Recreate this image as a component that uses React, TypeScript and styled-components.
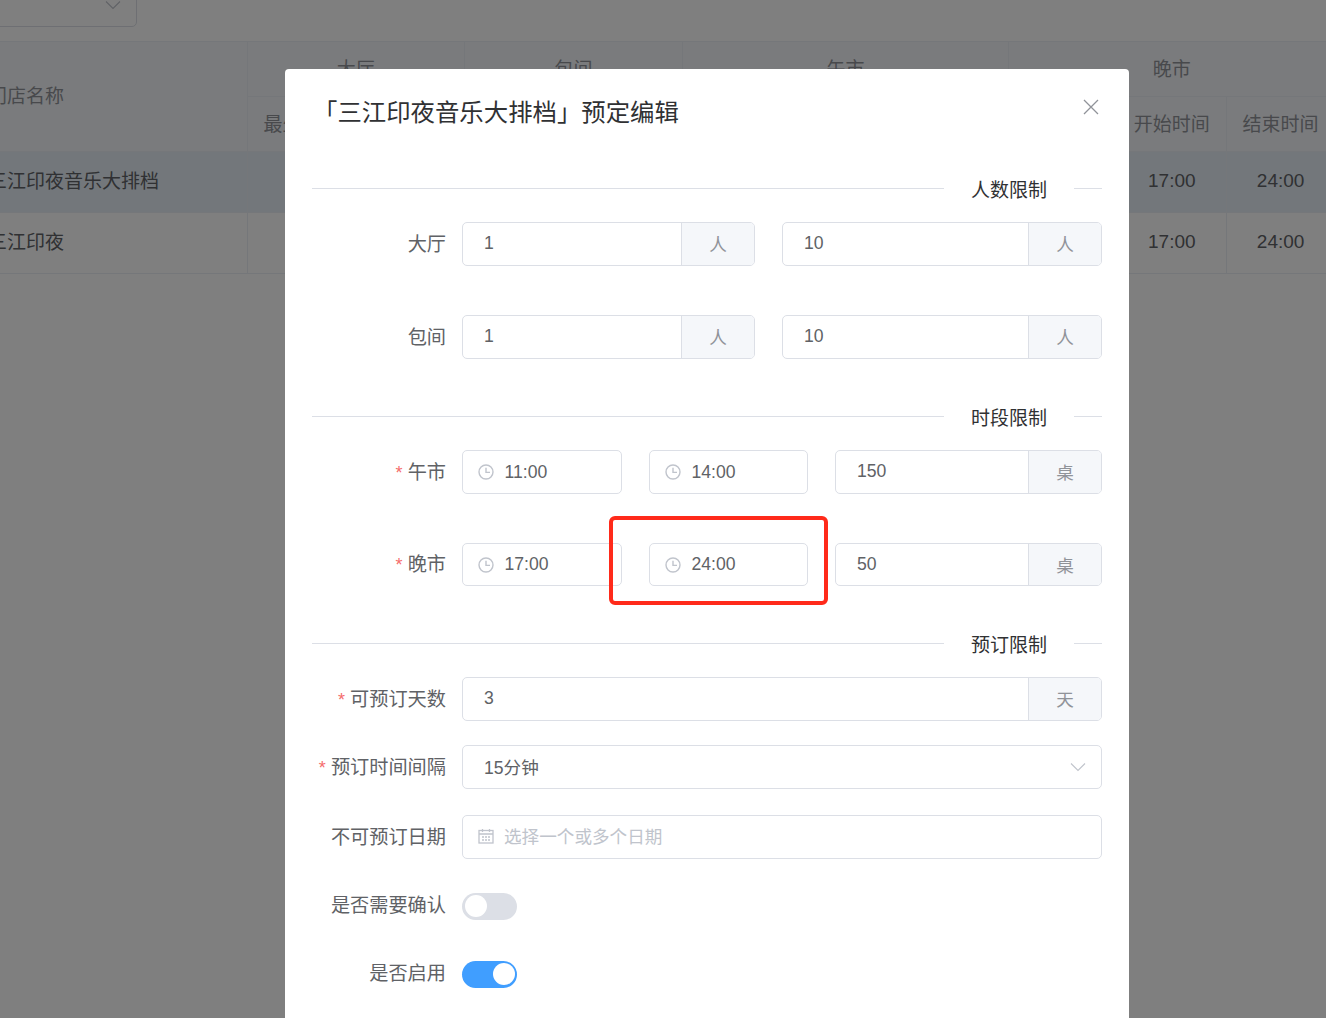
import styled, { createGlobalStyle } from 'styled-components'

const GlobalStyle = createGlobalStyle`
  html, body {
    margin: 0;
    padding: 0;
    background: #fff;
    font-family: "Liberation Sans", "Noto Sans CJK SC", sans-serif;
  }
  * {
    box-sizing: border-box;
  }
`

const Screen = styled.div`
  position: relative;
  width: 1326px;
  height: 1018px;
  overflow: hidden;
`

const Page = styled.div`
  margin-left: -40px;
  width: 1380px;
`

const FilterSelect = styled.div`
  display: flex;
  align-items: center;
  justify-content: flex-end;
  width: 177px;
  height: 44px;
  margin-top: -17px;
  padding-right: 15px;
  border: 1px solid #dcdfe6;
  border-radius: 5px;
  color: #c0c4cc;
`

const Table = styled.table`
  margin-top: 14px;
  width: 1375px;
  table-layout: fixed;
  border-collapse: collapse;
  border-top: 1px solid #ebeef5;
  font-size: 19px;
`

const Th = styled.th<{ $first?: boolean }>`
  height: 55px;
  padding: ${(p) => (p.$first ? '0 0 4px 28px' : '0 0 4px')};
  background: #f5f7fa;
  border-right: 1px solid #ebeef5;
  border-bottom: 1px solid #ebeef5;
  color: #909399;
  font-weight: 400;
  text-align: ${(p) => (p.$first ? 'left' : 'center')};
`

const Row = styled.tr<{ $active?: boolean }>`
  background: ${(p) => (p.$active ? '#e6eff7' : '#fff')};
`

const Td = styled.td<{ $first?: boolean }>`
  height: 61px;
  padding: ${(p) => (p.$first ? '0 0 6px 28px' : '0 0 3px')};
  border-right: 1px solid #ebeef5;
  border-bottom: 1px solid #ebeef5;
  color: #606266;
  text-align: ${(p) => (p.$first ? 'left' : 'center')};
  white-space: nowrap;
`

const Overlay = styled.div`
  position: absolute;
  inset: 0;
  padding: 69px 0 0 285px;
  background: rgba(0, 0, 0, 0.5);
`

const Modal = styled.div`
  position: relative;
  width: 844px;
  height: 1100px;
  padding: 0 27px;
  background: #fff;
  border-radius: 4px;
`

const Title = styled.div`
  height: 86px;
  padding-top: 25px;
  padding-left: 1px;
  color: #303133;
  font-size: 24.4px;
  line-height: 38px;
  white-space: nowrap;
`

const CloseButton = styled.button`
  position: absolute;
  top: 30px;
  right: 30px;
  display: flex;
  padding: 0;
  border: 0;
  background: none;
  color: #909399;
`

const Section = styled.div<{ $top: number }>`
  display: flex;
  align-items: center;
  height: 1px;
  margin-top: ${(p) => p.$top}px;
  margin-bottom: 33px;
  color: #303133;
  font-size: 19px;

  &::before {
    content: '';
    flex: 1;
    height: 1px;
    background: #dcdfe6;
  }

  &::after {
    content: '';
    width: 28px;
    height: 1px;
    background: #dcdfe6;
  }

  span {
    padding: 0 27px;
    white-space: nowrap;
  }
`

const FormRow = styled.div<{ $mb?: number; $h?: number }>`
  display: flex;
  align-items: center;
  height: ${(p) => p.$h ?? 44}px;
  margin-bottom: ${(p) => p.$mb ?? 0}px;
`

const Label = styled.label`
  flex: none;
  width: 150px;
  padding-right: 16px;
  padding-bottom: 3px;
  color: #606266;
  font-size: 19.2px;
  text-align: right;
  white-space: nowrap;
`

const Required = styled.i`
  margin-right: 5px;
  color: #f56c6c;
  font-size: 18px;
  font-style: normal;
`

const Fields = styled.div`
  display: flex;
  flex: 1;
  gap: 27px;
  height: 100%;
`

const InputGroup = styled.div<{ $width?: number }>`
  display: flex;
  flex: ${(p) => (p.$width ? 'none' : 1)};
  width: ${(p) => (p.$width ? `${p.$width}px` : 'auto')};
  height: 100%;
  border: 1px solid #dcdfe6;
  border-radius: 5px;
  background: #fff;
  color: #606266;
  font-size: 17.6px;
`

const InputText = styled.div`
  display: flex;
  flex: 1;
  align-items: center;
  padding-left: 21px;
  padding-bottom: 1px;
`

const Addon = styled.div`
  display: flex;
  flex: none;
  align-items: center;
  justify-content: center;
  width: 73px;
  padding-bottom: 1px;
  border-left: 1px solid #dcdfe6;
  border-radius: 0 4px 4px 0;
  background: #f5f7fa;
  color: #909399;
`

const TimeField = styled.div<{ $width: number }>`
  position: relative;
  display: flex;
  flex: none;
  align-items: center;
  gap: 10.5px;
  width: ${(p) => p.$width}px;
  height: 100%;
  padding-left: 15px;
  border: 1px solid #dcdfe6;
  border-radius: 5px;
  color: #606266;
  font-size: 17.6px;
`

const FieldIcon = styled.svg`
  flex: none;
  width: 16px;
  height: 16px;
  color: #c0c4cc;
`

const RedMark = styled.div`
  position: absolute;
  top: -28px;
  left: -41px;
  width: 219px;
  height: 89px;
  border: 4.5px solid #ff2a1a;
  border-radius: 6px;
  pointer-events: none;
`

const SelectBox = styled(InputGroup)`
  align-items: center;
  justify-content: space-between;
  padding: 0 15px 1px 21px;
`

const SelectArrow = styled.span`
  display: flex;
  color: #c0c4cc;
`

const DateBox = styled(InputGroup)`
  align-items: center;
  gap: 10px;
  padding: 0 0 3px 15px;
  color: #c0c4cc;
`

const Switch = styled.div<{ $on?: boolean }>`
  position: relative;
  width: 55px;
  height: 27px;
  margin-top: 2px;
  border-radius: 14px;
  background: ${(p) => (p.$on ? '#409eff' : '#dcdfe6')};

  &::after {
    content: '';
    position: absolute;
    top: 2.5px;
    left: ${(p) => (p.$on ? '30.5px' : '2.5px')};
    width: 22px;
    height: 22px;
    border-radius: 50%;
    background: #fff;
  }
`

const Chevron = () => (
  <svg width='16' height='16' viewBox='0 0 16 16' fill='none' stroke='currentColor' strokeWidth='1.1'>
    <path d='M1 4.5l7 7 7-7' />
  </svg>
)

const ClockIcon = () => (
  <FieldIcon viewBox='0 0 16 16' fill='none' stroke='currentColor' strokeWidth='1.4'>
    <circle cx='8' cy='8' r='7' />
    <path d='M8 3.8V8.4h4' />
  </FieldIcon>
)

const CalendarIcon = () => (
  <FieldIcon viewBox='0 0 16 16' fill='none' stroke='currentColor' strokeWidth='1.3'>
    <rect x='1' y='2.5' width='14' height='12.5' />
    <path d='M1 6h14M4.5 1v3M11.5 1v3M4 9h2M7 9h2M10 9h2M4 12h2M7 12h2M10 12h2' />
  </FieldIcon>
)

const Unit = ({ value, unit, width }: { value: string; unit: string; width?: number }) => (
  <InputGroup $width={width}>
    <InputText>{value}</InputText>
    <Addon>{unit}</Addon>
  </InputGroup>
)

const columns = [287, 108.8, 108.8, 108.8, 108.8, 108.8, 108.8, 108.8, 108.8, 108.8, 108.8]

export default function App() {
  return (
    <Screen>
      <GlobalStyle />
      <Page>
        <FilterSelect>
          <Chevron />
        </FilterSelect>
        <Table>
          <colgroup>
            {columns.map((w, i) => (
              <col key={i} style={{ width: w }} />
            ))}
          </colgroup>
          <thead>
            <tr>
              <Th $first rowSpan={2}>
                门店名称
              </Th>
              <Th colSpan={2}>大厅</Th>
              <Th colSpan={2}>包间</Th>
              <Th colSpan={3}>午市</Th>
              <Th colSpan={3}>晚市</Th>
            </tr>
            <tr>
              <Th>最少人数</Th>
              <Th />
              <Th />
              <Th />
              <Th />
              <Th />
              <Th />
              <Th />
              <Th>开始时间</Th>
              <Th>结束时间</Th>
            </tr>
          </thead>
          <tbody>
            <Row $active>
              <Td $first>三江印夜音乐大排档</Td>
              <Td />
              <Td />
              <Td />
              <Td />
              <Td />
              <Td />
              <Td />
              <Td />
              <Td>17:00</Td>
              <Td>24:00</Td>
            </Row>
            <Row>
              <Td $first>三江印夜</Td>
              <Td />
              <Td />
              <Td />
              <Td />
              <Td />
              <Td />
              <Td />
              <Td />
              <Td>17:00</Td>
              <Td>24:00</Td>
            </Row>
          </tbody>
        </Table>
      </Page>

      <Overlay>
        <Modal>
          <Title>「三江印夜音乐大排档」预定编辑</Title>
          <CloseButton aria-label='close'>
            <svg width='16' height='16' viewBox='0 0 16 16' fill='none' stroke='currentColor' strokeWidth='1.3'>
              <path d='M1 1l14 14M15 1L1 15' />
            </svg>
          </CloseButton>

          <Section $top={33}>
            <span>人数限制</span>
          </Section>
          <FormRow $mb={49}>
            <Label>大厅</Label>
            <Fields>
              <Unit value='1' unit='人' width={293} />
              <Unit value='10' unit='人' />
            </Fields>
          </FormRow>
          <FormRow>
            <Label>包间</Label>
            <Fields>
              <Unit value='1' unit='人' width={293} />
              <Unit value='10' unit='人' />
            </Fields>
          </FormRow>

          <Section $top={57}>
            <span>时段限制</span>
          </Section>
          <FormRow $mb={49}>
            <Label>
              <Required>*</Required>午市
            </Label>
            <Fields>
              <TimeField $width={160}>
                <ClockIcon />
                11:00
              </TimeField>
              <TimeField $width={159}>
                <ClockIcon />
                14:00
              </TimeField>
              <Unit value='150' unit='桌' />
            </Fields>
          </FormRow>
          <FormRow $h={43}>
            <Label>
              <Required>*</Required>晚市
            </Label>
            <Fields>
              <TimeField $width={160}>
                <ClockIcon />
                17:00
              </TimeField>
              <TimeField $width={159}>
                <ClockIcon />
                24:00
                <RedMark />
              </TimeField>
              <Unit value='50' unit='桌' />
            </Fields>
          </FormRow>

          <Section $top={57}>
            <span>预订限制</span>
          </Section>
          <FormRow $mb={24}>
            <Label>
              <Required>*</Required>可预订天数
            </Label>
            <Fields>
              <Unit value='3' unit='天' />
            </Fields>
          </FormRow>
          <FormRow $mb={26}>
            <Label>
              <Required>*</Required>预订时间间隔
            </Label>
            <Fields>
              <SelectBox>
                15分钟
                <SelectArrow>
                  <Chevron />
                </SelectArrow>
              </SelectBox>
            </Fields>
          </FormRow>
          <FormRow $mb={24}>
            <Label>不可预订日期</Label>
            <Fields>
              <DateBox>
                <CalendarIcon />
                选择一个或多个日期
              </DateBox>
            </Fields>
          </FormRow>
          <FormRow $mb={24}>
            <Label>是否需要确认</Label>
            <Switch />
          </FormRow>
          <FormRow>
            <Label>是否启用</Label>
            <Switch $on />
          </FormRow>
        </Modal>
      </Overlay>
    </Screen>
  )
}
